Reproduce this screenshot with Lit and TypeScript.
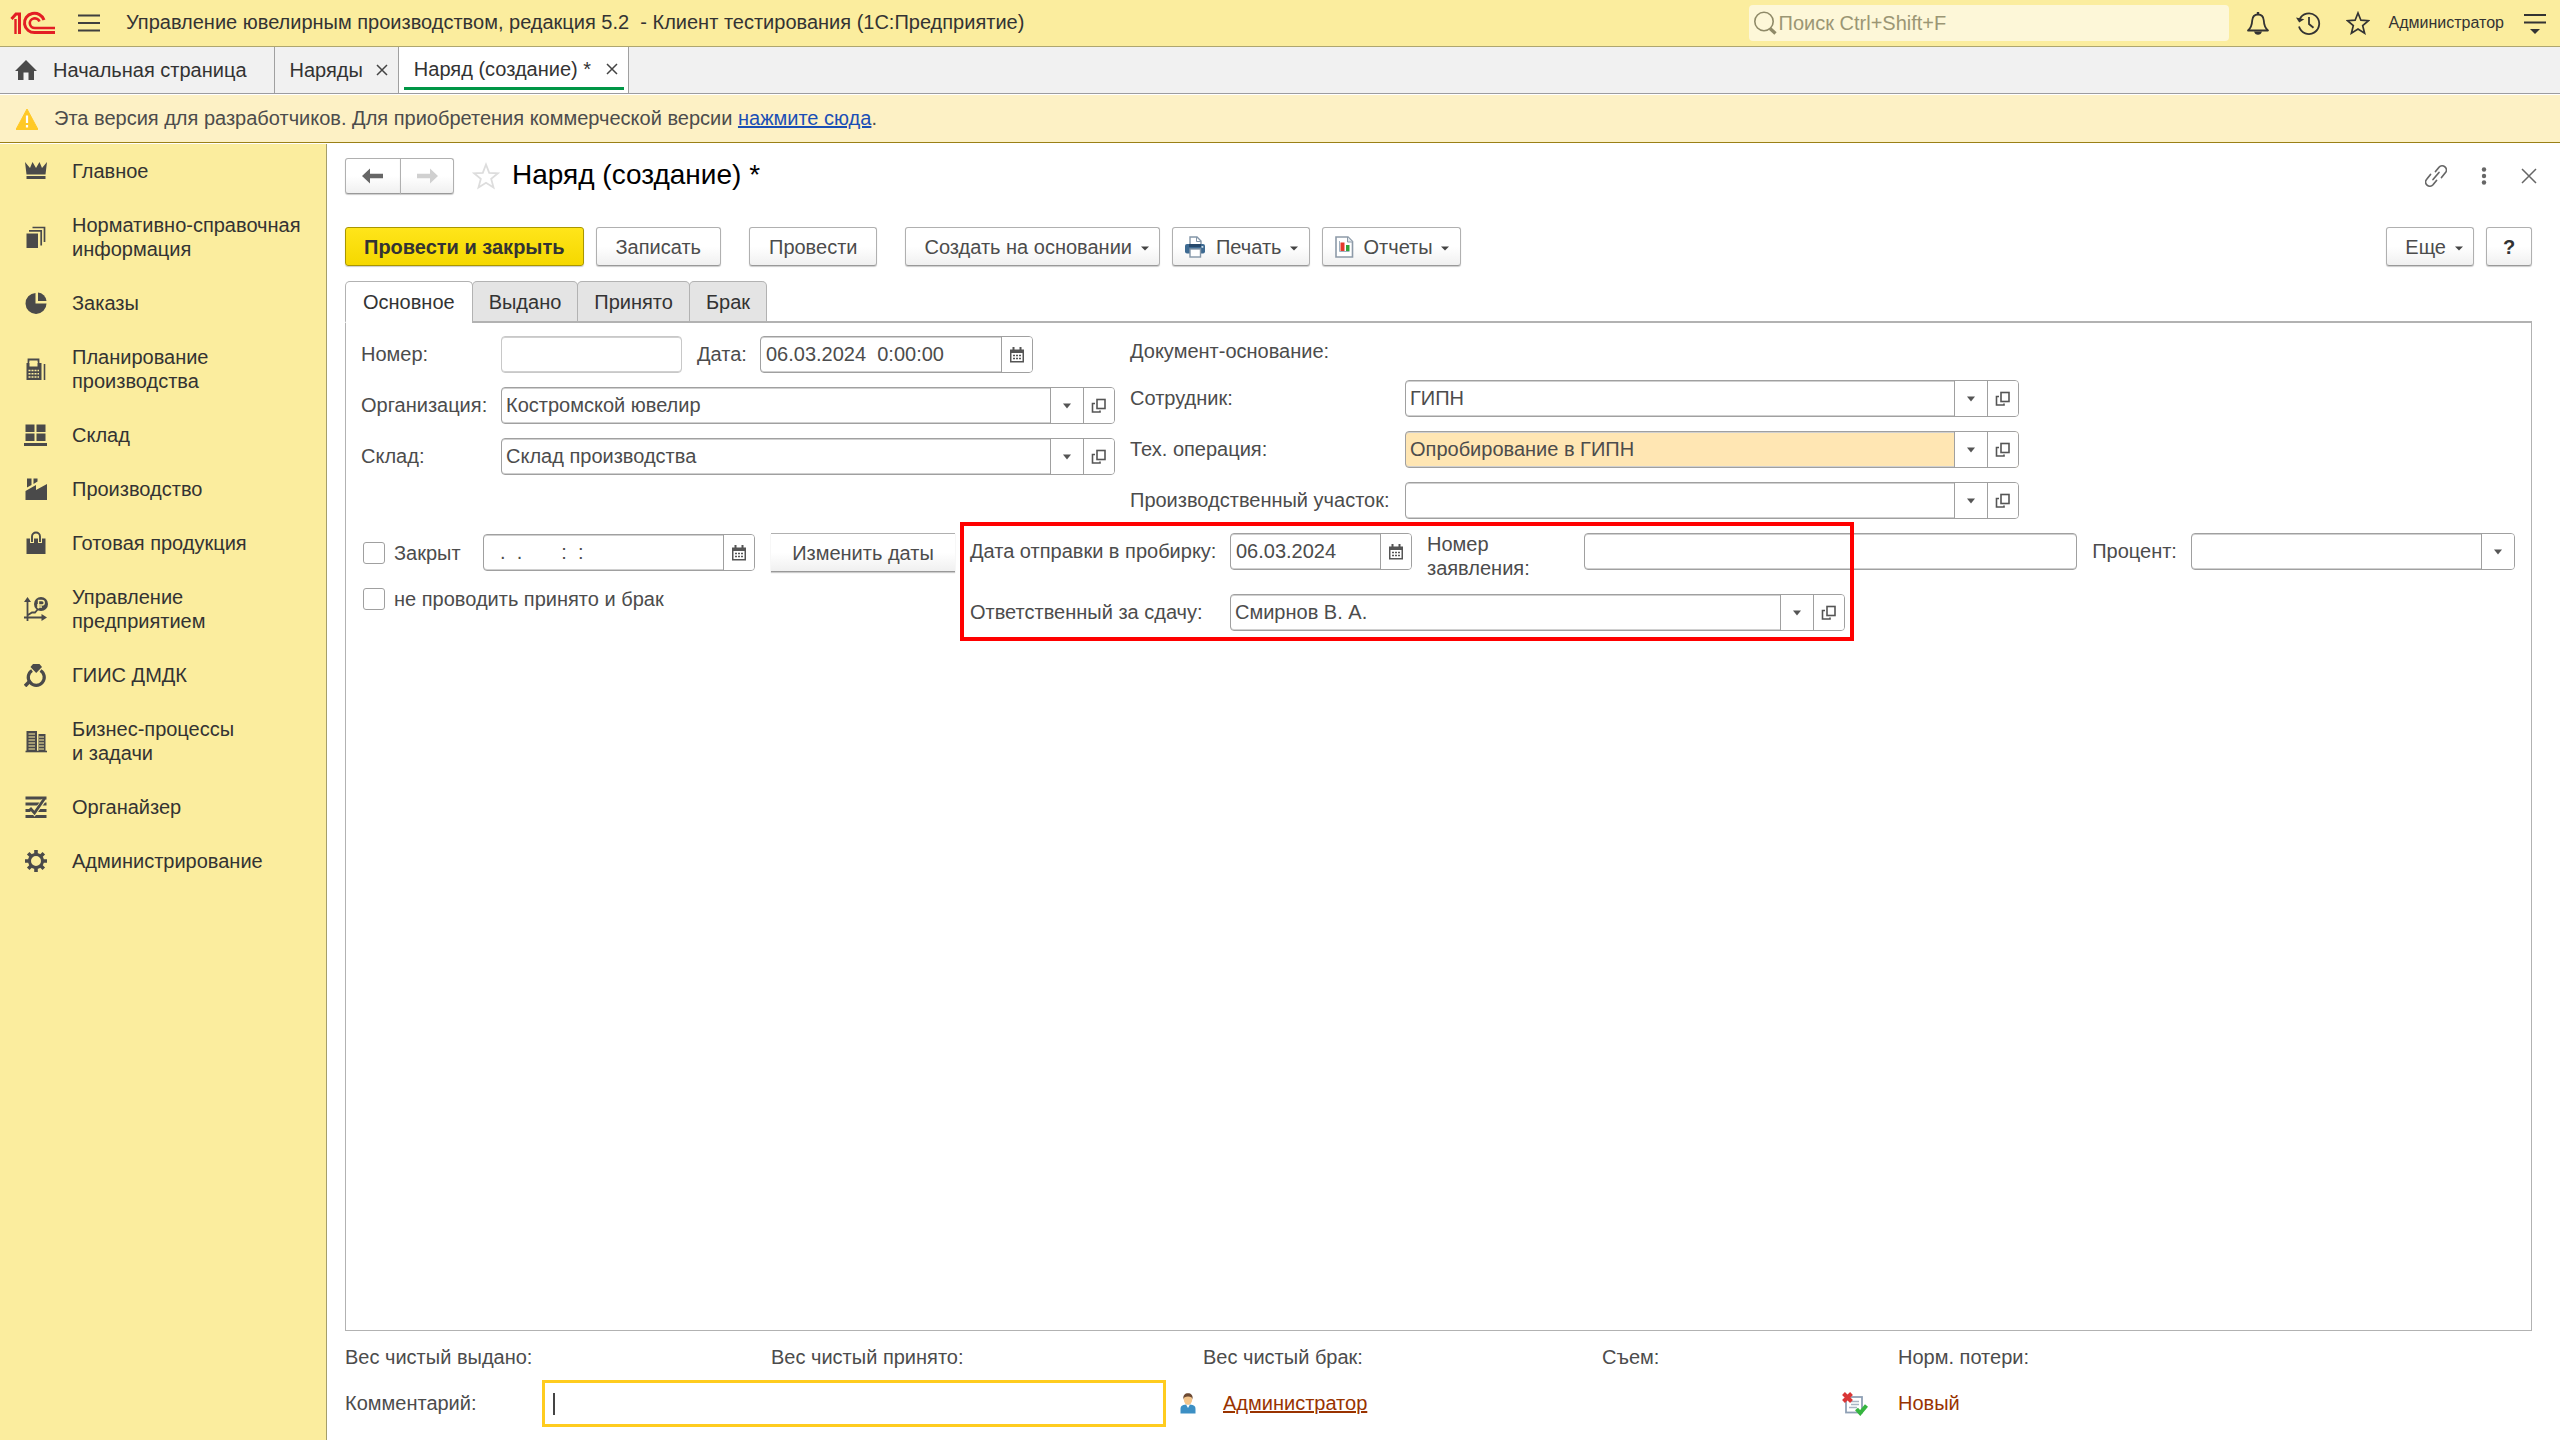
import { LitElement, html, svg, css, nothing, type TemplateResult } from "lit";
import { customElement, state } from "lit/decorators.js";

type Pic = TemplateResult;

const svgIcon = (w: number, h: number, body: unknown, vb = `0 0 ${w} ${h}`): Pic =>
  html`<svg class="ico" width=${w} height=${h} viewBox=${vb} aria-hidden="true">${body}</svg>`;

const logo = svgIcon(46, 24, svg`
  <g fill="none" stroke="#e31e24" stroke-width="3">
    <path d="M1.5 8 6 3h3.5v20"/>
    <path d="M5.5 8v15" stroke-width="2.4"/>
    <path d="M34 9A10 9.600 0 1 0 25 21.500H45"/>
    <path d="M29.500 10.500A5 4.800 0 1 0 25 17H45" stroke-width="2.600"/>
  </g>`);

const burger = svgIcon(22, 18, svg`<path d="M0 1.500H22M0 9H22M0 16.500H22" stroke="#3f3f3f" stroke-width="2"/>`);
const magnifier = svgIcon(24, 24, svg`<circle cx="11" cy="10.500" r="9.200" fill="none" stroke="#8f8a68" stroke-width="1.600"/><path d="M17 17.500 22.500 22.500" stroke="#8f8a68" stroke-width="3.400"/>`);
const bell = svgIcon(24, 24, svg`<path d="M2 19.500C5.500 16.500 6 14 6.200 9.500 6.500 5.500 8.500 3.500 12 3.500s5.500 2 5.800 6C18 14 18.500 16.500 22 19.500Z" fill="none" stroke="#333" stroke-width="1.800" stroke-linejoin="round"/><path d="M12 1v3" stroke="#333" stroke-width="2.400"/><path d="M8 20.500h8c-.5 2-2 3.300-4 3.300s-3.500-1.300-4-3.300Z" fill="#333"/>`);
const history = svgIcon(26, 24, svg`<path d="M4.500 8.500A10.300 10.300 0 1 1 4 15.500" fill="none" stroke="#333" stroke-width="1.800"/><path d="M1 6.500 4.200 11.500 9.300 8.200Z" fill="#333"/><path d="M14 6v7l4.500 3.800" fill="none" stroke="#333" stroke-width="1.800"/>`);
const starTop = svgIcon(24, 24, svg`<path d="M12 2 14.900 9.200 22.500 9.700 16.700 14.600 18.600 22.200 12 18 5.400 22.200 7.300 14.600 1.500 9.700 9.100 9.200Z" fill="none" stroke="#333" stroke-width="1.700"/>`);
const panelMenu = svgIcon(22, 22, svg`<path d="M0 3H22M0 10.500H22" stroke="#333" stroke-width="2"/><path d="M6 17h10l-5 5Z" fill="#333"/>`);
const home = svgIcon(22, 20, svg`<path d="M11 0 22 11H19V20H13.500V12.500H8.500V20H3V11H0Z" fill="#4a4a4a"/>`);
const cross = svgIcon(12, 12, svg`<path d="M1 1 11 11M11 1 1 11" stroke="#444" stroke-width="1.500"/>`);
const crossBig = svgIcon(16, 16, svg`<path d="M1 1 15 15M15 1 1 15" stroke="#666" stroke-width="1.500"/>`);
const warning = svgIcon(22, 22, svg`<path d="M11 1 22 21.500H0Z" fill="#ffc926" stroke="#ffc926" stroke-linejoin="round"/><path d="M11 7.500v7.500M11 17v2.500" stroke="#fff" stroke-width="2.200"/>`);
const arrowLeft = svgIcon(22, 16, svg`<path d="M0 8 8 0.500V5.800H21V10.200H8V15.500Z" fill="#666"/>`);
const arrowRight = svgIcon(22, 16, svg`<path d="M22 8 14 .5V5.800H1V10.200H14V15.500Z" fill="#d0d0d0"/>`);
const starBig = svgIcon(28, 28, svg`<path d="M14 2.500 17.200 10.800 26 11.300 19.200 16.900 21.500 25.500 14 20.700 6.500 25.500 8.800 16.900 2 11.300 10.800 10.800Z" fill="none" stroke="#ddd" stroke-width="1.800"/>`);
const link = svgIcon(22, 24, svg`<g fill="none" stroke="#666" stroke-width="1.700" stroke-linecap="round"><path d="M11.500 7.500 15 3.200a4.200 4.200 0 0 1 6.300 5.600L17.500 13.500"/><path d="M12.500 16.500 9 20.800a4.200 4.200 0 0 1-6.300-5.600L6.500 10.500"/><path d="M9 15.500 15 8.500"/></g>`, "1 0 22 24");
const dots = svgIcon(6, 18, svg`<circle cx="3" cy="2.500" r="2.200" fill="#666"/><circle cx="3" cy="9" r="2.200" fill="#666"/><circle cx="3" cy="15.500" r="2.200" fill="#666"/>`);
const caretDown = svgIcon(8, 8, svg`<path d="M0 3.500H8L4 7.500Z" fill="#444"/>`);
const caretField = svgIcon(8, 6, svg`<path d="M0 .5H8L4 5.500Z" fill="#555"/>`);
const openRef = svgIcon(16, 16, svg`<g fill="none" stroke="#555" stroke-width="1.600"><rect x="6" y="1.500" width="8" height="9"/><path d="M4 5.500H1.500V14H9V12.500"/></g>`);
const calendar = svgIcon(16, 16, svg`<path d="M1 2.500H15V15.500H1Z" fill="#555"/><path d="M2.500 6H13.500V14H2.500Z" fill="#fff"/><path d="M4.500 0V4M11.500 0V4" stroke="#555" stroke-width="2"/><path d="M4 8.500H12M4 11.500H12" stroke="#555" stroke-width="1.600" stroke-dasharray="2 1"/>`);
const printer = svgIcon(22, 22, svg`<path d="M6 9V1H13L17 5V9" fill="#fff" stroke="#8496a8" stroke-width="1.400"/><path d="M12.500 1V5.500H17" fill="none" stroke="#8496a8"/><rect x="1" y="8" width="20" height="9.500" rx="2" fill="#3d6a92"/><rect x="5" y="8" width="12" height="3" fill="#27496b"/><rect x="6" y="13" width="10.500" height="8" fill="#fff" stroke="#8496a8" stroke-width="1.400"/><rect x="17.500" y="10" width="1.800" height="1.800" fill="#cfe0ee"/>`);
const report = svgIcon(20, 22, svg`<path d="M2 1H14L18.500 5.500V21H2Z" fill="#fff" stroke="#8d9aa8" stroke-width="1.600"/><path d="M13.500 1V6H18.500" fill="#dfe5ea" stroke="#8d9aa8"/><path d="M5.500 5V15.500H15.500" fill="none" stroke="#9fb0bf"/><rect x="6.500" y="6.500" width="4" height="8.500" fill="#e5392c"/><rect x="12" y="9" width="3.500" height="6" fill="#30a33a"/>`);
const person = svgIcon(16, 21, svg`<path d="M0.500 20.500V16C.5 12.500 3 11.500 8 11.500s7.500 1 7.500 4.500v4.500Z" fill="#3c8fc4"/><path d="M6 11.500 8 15l2-3.500Z" fill="#fff"/><ellipse cx="8" cy="6.500" rx="4.200" ry="5.200" fill="#f3c58b"/><path d="M3.300 6.500C3 2 5 .3 8 .3s5 1.700 4.700 6.200C12 4.500 11 3.600 8 3.600S4 4.500 3.300 6.500Z" fill="#6d4a33"/>`);
const posting = svgIcon(26, 24, svg`<rect x="4" y="5" width="16" height="15.500" fill="#fff" stroke="#8fa0b5" stroke-width="1.800"/><path d="M9 9.500H17M9 12.500H17M7 15.500H15" stroke="#a9b5c4" stroke-width="1.400"/><path d="M1.500 1.500 9.500 9.500M9.500 1.500 1.500 9.500" stroke="#d93636" stroke-width="4"/><path d="M14.500 17 18.200 21 24.500 13.500" fill="none" stroke="#35b53f" stroke-width="4"/>`);

const D = "#4a4a4a";
const sections: { text: string; icon: unknown }[] = [
  { text: "Главное", icon: svg`<path d="M1 3 6 9 8.500 3 12 9 15.500 3 18 9 23 3 21.500 15.500H2.500Z" fill=${D}/><path d="M2.500 18.500H21.500" stroke=${D} stroke-width="3"/>` },
  { text: "Нормативно-справочная информация", icon: svg`<path d="M2.500 8.500H14V23H2.500Z" fill=${D}/><path d="M5 5.800H17.200V20.500M8.500 2.500H20.500V17" fill="none" stroke=${D} stroke-width="1.700"/>` },
  { text: "Заказы", icon: svg`<path d="M11.500 2V12.500H22.500A10.500 10.500 0 1 1 11.500 2Z" fill=${D}/><path d="M14 1.500A9.500 9.500 0 0 1 22.500 10H14Z" fill=${D}/>` },
  { text: "Планирование производства", icon: svg`<path d="M4.500 8V2.500H14.500V8" fill="none" stroke=${D} stroke-width="1.800"/><path d="M2.500 6H17.500V23H2.500Z" fill=${D}/><path d="M5.500 5H13.500V9.500H5.500Z" fill="#fbed9e"/><path d="M4.500 13.500H15M4.500 16.800H15M4.500 20H15" stroke="#fbed9e" stroke-width="1.600" stroke-dasharray="2 1"/><path d="M20.500 7V23" stroke=${D} stroke-width="1.600"/>` },
  { text: "Склад", icon: svg`<path d="M1.500 1.500H10.500V9H1.500ZM12.500 1.500H21.500V9H12.500ZM1.500 10.500H10.500V18H1.500ZM12.500 10.500H21.500V18H12.500ZM0 20H23V23H0Z" fill=${D}/>` },
  { text: "Производство", icon: svg`<path d="M3 1.500H7.500V8L3 10.500ZM9.500 1.500H13.500V4.500L9.500 7ZM1.500 14 12 8V13L23 7V23H1.500Z" fill=${D}/>` },
  { text: "Готовая продукция", icon: svg`<path d="M2.500 7.500H21.500V23H2.500Z" fill=${D}/><path d="M8 12V5.500a4 4 0 0 1 8 0V12" fill="none" stroke="#fbed9e" stroke-width="4"/><path d="M8 11V5.500a4 4 0 0 1 8 0V11" fill="none" stroke=${D} stroke-width="1.900"/>` },
  { text: "Управление предприятием", icon: svg`<path d="M3.500 24V4M0 20.500H20M4 18 8 15.500H11L14 12" fill="none" stroke=${D} stroke-width="1.800"/><path d="M3.500 0 7 5H0ZM23 20.500 17.500 24V17Z" fill=${D}/><circle cx="17" cy="7" r="7" fill=${D}/><path d="M14.500 11.500V3.500H18a2.200 2.200 0 0 1 0 4.500H13M13 10H18" fill="none" stroke="#fbed9e" stroke-width="1.400"/>` },
  { text: "ГИИС ДМДК", icon: svg`<path d="M8 7.500A8 8 0 1 0 16.500 7.500" fill="none" stroke=${D} stroke-width="3.200"/><path d="M6.500 17.500 1 23" stroke=${D} stroke-width="3.600"/><path d="M12.200 10 6.500 4 9 1H15.500L18 4Z" fill=${D}/>` },
  { text: "Бизнес-процессы и\u00a0задачи", icon: svg`<path d="M2.500 2H13V22.500H2.500ZM14.500 5H21.500V22.500H14.500Z" fill=${D}/><path d="M4.500 5H11M4.500 8H11M4.500 11H11M4.500 14H11M4.500 17H11M4.500 20H11M15 8H20M15 11H20M15 14H20M15 17H20M15 20H20" stroke="#fbed9e" stroke-width="1.200"/><path d="M1.500 22.500H23" stroke=${D} stroke-width="1.600"/>` },
  { text: "Органайзер", icon: svg`<path d="M1.500 3H22.500M1.500 9H22.500M1.500 15.500H22.500M1.500 21.500H22.500" stroke=${D} stroke-width="2.800"/><path d="M8 15 10.500 18 20 5" fill="none" stroke="#fbed9e" stroke-width="4.600"/><path d="M6 13 10.500 18 20.500 3.500" fill="none" stroke=${D} stroke-width="2.800"/>` },
  { text: "Администрирование", icon: svg`<circle cx="12" cy="12" r="6.500" fill="none" stroke=${D} stroke-width="3"/><path d="M12 1V5M12 19V23M1 12H5M19 12H23M4.200 4.200 7 7M17 17 19.800 19.800M19.800 4.200 17 7M7 17 4.200 19.800" stroke=${D} stroke-width="3.600"/>` },
];

const pages = ["Основное", "Выдано", "Принято", "Брак"];

@customElement("app-root")
export class AppRoot extends LitElement {
  @state() private page = 0;

  static styles = css`
    :host { display: flex; flex-direction: column; min-height: 100vh; background: #fff; color: #4c4c4c;
      font: 20px/24px "Liberation Sans", Arial, sans-serif; }
    * { box-sizing: border-box; }
    button, input, select { font: inherit; color: inherit; margin: 0; }
    button { cursor: pointer; }
    .ico { display: block; flex: none; }
    .plain { border: 0; background: none; padding: 0; display: flex; align-items: center; justify-content: center; }

    .top { display: flex; align-items: center; height: 47px; padding: 0 14px 0 10px; background: #fbed9e;
      border-bottom: 1px solid #aea66f; color: #333; }
    .top .burger { margin: 0 26px 0 22px; }
    .top h1 { font: inherit; margin: 0; padding-bottom: 2px; white-space: pre; flex: 1; }
    .search { display: flex; align-items: center; gap: 6px; width: 480px; height: 36px; padding-left: 4px; margin-right: 17px;
      border-radius: 4px; background: #fdf7d8; }
    .search input { flex: 1; min-width: 0; border: 0; background: none; padding: 0; outline: 0; margin-left: -4px; }
    .search input::placeholder { color: #9b9674; opacity: 1; }
    .top .icons { display: flex; gap: 25px; margin-right: 19px; }
    .user { font-size: 16px; margin-right: 20px; }

    .tabs { display: flex; height: 47px; background: #f1f1f1; border-bottom: 1px solid #9c9ca0; color: #333; }
    .tab { display: flex; align-items: center; border-right: 1px solid #a0a0a0; }
    .tab .label { color: inherit; font: inherit; }
    .tab.home { padding: 0 27px 0 15px; }
    .tab.home .label { gap: 16px; }
    .tab.doc { padding: 0 10px 0 15px; gap: 13px; }
    .tab.on { background: #fff; }
    .tab.on .inner { display: flex; align-items: center; gap: 15px; height: 43px; align-self: flex-start;
      margin: 0 4px 0 5px; padding: 0 6px 0 10px; border-bottom: 3px solid #009646; border-top: 3px solid #fff; }

    .notice { display: flex; align-items: center; gap: 16px; height: 48px; margin-top: 1px; padding: 0 16px;
      background: #fdf1c5; border-bottom: 1px solid #9a8016; }
    .notice p { margin: 0; padding-bottom: 2px; }
    .notice a { color: #1a4fb5; }

    .body { display: flex; flex: 1; margin-top: 1px; }
    .side { width: 327px; flex: none; background: #fbed9e; border-right: 1px solid #a59e6a; }
    .side ul { list-style: none; margin: 0; padding: 0; }
    .side a { display: flex; align-items: center; gap: 24px; padding: 15px 16px 15px 24px; color: #333; text-decoration: none; }
    .side span { max-width: 232px; }
    .side .narrow { max-width: 190px; }

    main { flex: 1; min-width: 0; display: flex; flex-direction: column; padding: 14px 28px 13px 18px; }
    .head { display: flex; align-items: center; height: 36px; }
    .btn { display: flex; align-items: center; justify-content: center; border: 1px solid #b0b0b0; border-bottom-color: #999; border-radius: 3px;
      background: linear-gradient(#fff 50%, #f0f0f0); box-shadow: 0 1px 1px #ccc; height: 39px; padding: 0 19px; white-space: nowrap; }
    .nav { display: flex; margin-right: 18px; }
    .nav .btn { height: 36px; padding: 0; width: 56px; border-radius: 3px 0 0 3px; }
    .nav .btn + .btn { width: 54px; margin-left: -1px; border-radius: 0 3px 3px 0; }
    .head h2 { font-size: 28px; font-weight: 400; line-height: 32px; color: #000; margin: 0; padding: 0 0 2px 12px; flex: 1; }
    .tools { display: flex; align-items: center; gap: 34px; margin-right: -5px; }
    .commands { display: flex; margin-top: 33px; }
    .commands .btn { margin-right: 12px; }
    .commands .apart { margin-right: 28px; }
    .commands .menu { gap: 9px; padding: 0 10px 0 18px; }
    .commands .pic { padding: 0 11px; gap: 10px; }
    .commands .pic .ico:last-child { margin-left: -2px; }
    .commands .push { margin-left: auto; }
    .commands .help { margin: 0; width: 46px; padding: 0; font-weight: 700; color: #333; }
    .btn.main { background: linear-gradient(#ffe51a, #f5d800); border-color: #a99600; padding: 0 18px; font-weight: 700; color: #333; }

    .pages { display: flex; margin-top: 15px; height: 42px; }
    .page { border: 1px solid #b2b2b2; border-bottom: 2px solid #b2b2b2; background: #e4e4e4; padding: 0 16px; margin-right: -1px; border-radius: 5px 5px 0 0; color: #333; }
    .page.on { background: #fff; border-bottom-color: #fff; padding: 0 17px; }
    .pages .rest { flex: 1; border-bottom: 2px solid #b2b2b2; }
    .panel { flex: 1; border: 1px solid #b2b2b2; border-top: 0; padding: 13px 16px 13px 15px; }

    .upper { display: flex; gap: 15px; height: 184px; }
    .grid { display: grid; grid-template-columns: 140px 614px; grid-auto-rows: 37px; row-gap: 14px; align-content: start; align-items: center; }
    .grid.right { grid-template-columns: 275px 614px; grid-template-rows: 30px; }
    .grid label, .line label { padding-bottom: 2px; }
    .number { display: flex; align-items: center; }
    .number label { width: 78px; padding-left: 15px; }
    .number > .field { width: 181px; }
    .number > .date { width: 273px; }

    .field { display: flex; height: 37px; border: 1px solid #a0a0a0; border-radius: 4px; min-width: 0;
      box-shadow: inset 0 1px #d0d0d0, inset 0 -1px #d0d0d0; background: #fff; overflow: hidden; }
    .field.off { border-color: #c8c8c8; }
    .field input { flex: 1; min-width: 0; width: 100%; border: 0; padding: 0 5px 2px; background: none; outline: 0; }
    .pick { display: grid; flex: 1; min-width: 0; grid-template-columns: 1fr 33px; align-items: stretch; }
    .pick select { grid-area: 1 / 1 / 2 / 3; appearance: none; border: 0; background: none; padding: 0 36px 2px 4px; outline: 0; min-width: 0; }
    .pick span { grid-area: 1 / 2; border-left: 1px solid #a0a0a0; pointer-events: none; display: flex; align-items: center; justify-content: center; background: #fff; }
    .field.mark { background: #ffe6b3; }
    .field button { width: 31px; border-left: 1px solid #a0a0a0; background: #fff; flex: none; }

    .lower { display: flex; align-items: flex-start; gap: 15px; padding-top: 13px; }
    .closing { width: 594px; display: grid; grid-template-columns: 122px 272px 1fr; grid-template-rows: 39px 29px; row-gap: 12px; align-items: center; }
    .check { display: flex; align-items: center; gap: 9px; white-space: nowrap; padding-left: 2px; }
    .check input { appearance: none; width: 22px; height: 22px; border: 1px solid #a0a0a0; border-radius: 3px; background: #fff; flex: none; }
    .closing .wide { grid-column: 1 / 4; }
    .closing .btn { margin-left: 16px; border-width: 1px 0; border-radius: 0; padding: 0; }
    .assay { position: relative; flex: 1; min-width: 0; display: flex; flex-direction: column; gap: 24px; }
    .line { display: flex; align-items: center; height: 37px; }
    .line .first { width: 260px; flex: none; }
    .line .day { width: 182px; flex: none; }
    .line .second { width: 172px; padding: 8px 40px 0 15px; flex: none; }
    .line .app { flex: 493 1 0; }
    .line .third { padding: 0 13px 2px 15px; width: 114px; flex: none; }
    .line .pct { flex: 323 1 0; }
    .line .wide { width: 615px; }
    .frame { position: absolute; left: -10px; top: -11px; width: 894px; height: 119px; border: 4px solid #f00; pointer-events: none; }

    .totals { display: grid; grid-template-columns: 426px 432px 399px 296px 1fr; margin-top: 14px; }
    .foot { display: grid; grid-template-columns: 197px 624px 57px 619px 56px 1fr; align-items: center; margin-top: 11px; }
    .comment { display: flex; align-items: center; height: 47px; border: 3px solid #ffcc1f; padding: 0 8px; background: #fff; }
    .comment i { width: 2px; height: 22px; background: #444; }
    .comment input { flex: 1; min-width: 0; border: 0; outline: 0; background: none; padding: 0; caret-color: transparent; }
    .foot .person { padding-left: 14px; }
    .foot label, .foot a, .foot output { padding-bottom: 2px; }
    .foot a, .foot output { color: #993300; }
  `;

  private combo(id: string, value: string, cls = "", open = true) {
    return html`<div class="field ${cls}">
      <div class="pick">
        <select id=${id}><option>${value}</option></select>
        <span>${caretField}</span>
      </div>
      ${open ? html`<button class="plain" aria-label="Открыть">${openRef}</button>` : nothing}
    </div>`;
  }

  private date(id: string, value: string, cls = "") {
    return html`<div class="field ${cls}">
      <input id=${id} .value=${value}>
      <button class="plain" aria-label="Выбрать дату">${calendar}</button>
    </div>`;
  }

  private renderTop() {
    return html`<header class="top">
        ${logo}
        <button class="plain burger" aria-label="Меню">${burger}</button>
        <h1>Управление ювелирным производством, редакция 5.2  - Клиент тестирования (1С:Предприятие)</h1>
        <label class="search">${magnifier}<input type="search" placeholder="Поиск Ctrl+Shift+F" aria-label="Поиск"></label>
        <div class="icons">
          <button class="plain" aria-label="Уведомления">${bell}</button>
          <button class="plain" aria-label="История">${history}</button>
          <button class="plain" aria-label="Избранное">${starTop}</button>
        </div>
        <span class="user">Администратор</span>
        <button class="plain" aria-label="Настройки">${panelMenu}</button>
      </header>
      <nav class="tabs">
        <div class="tab home"><button class="plain label">${home}Начальная страница</button></div>
        <div class="tab doc"><button class="plain label">Наряды</button><button class="plain" aria-label="Закрыть">${cross}</button></div>
        <div class="tab on"><div class="inner"><button class="plain label">Наряд (создание) *</button><button class="plain" aria-label="Закрыть">${cross}</button></div></div>
      </nav>
      <div class="notice">${warning}<p>Эта версия для разработчиков. Для приобретения коммерческой версии <a href="#buy">нажмите сюда</a>.</p></div>`;
  }

  private renderForm() {
    return html`<div class="upper">
        <div class="grid">
          <label for="num">Номер:</label>
          <div class="number">
            <div class="field off"><input id="num"></div>
            <label for="date">Дата:</label>
            ${this.date("date", "06.03.2024  0:00:00", "date")}
          </div>
          <label for="org">Организация:</label>${this.combo("org", "Костромской ювелир")}
          <label for="store">Склад:</label>${this.combo("store", "Склад производства")}
        </div>
        <div class="grid right">
          <span>Документ-основание:</span><span></span>
          <label for="emp">Сотрудник:</label>${this.combo("emp", "ГИПН")}
          <label for="op">Тех. операция:</label>${this.combo("op", "Опробирование в ГИПН", "mark")}
          <label for="area">Производственный участок:</label>${this.combo("area", "")}
        </div>
      </div>
      <div class="lower">
        <div class="closing">
          <label class="check"><input type="checkbox">Закрыт</label>
          ${this.date("closed", "  .  .       :  :")}
          <button class="btn">Изменить даты</button>
          <label class="check wide"><input type="checkbox">не проводить принято и брак</label>
        </div>
        <div class="assay">
          <div class="line">
            <label class="first" for="sent">Дата отправки в пробирку:</label>
            ${this.date("sent", "06.03.2024", "day")}
            <label class="second" for="app">Номер заявления:</label>
            <div class="field app"><input id="app"></div>
            <label class="third" for="pct">Процент:</label>
            ${this.combo("pct", "", "pct", false)}
          </div>
          <div class="line">
            <label class="first" for="resp">Ответственный за сдачу:</label>
            ${this.combo("resp", "Смирнов В. А.", "wide")}
          </div>
          <div class="frame"></div>
        </div>
      </div>`;
  }

  render() {
    return html`${this.renderTop()}
      <div class="body">
        <nav class="side"><ul>
          ${sections.map((s, i) => html`<li><a href="#s${i}">${svgIcon(24, 24, s.icon)}<span class=${i === 1 ? "" : "narrow"}>${s.text}</span></a></li>`)}
        </ul></nav>
        <main>
          <div class="head">
            <div class="nav">
              <button class="btn" aria-label="Назад">${arrowLeft}</button>
              <button class="btn" aria-label="Вперед">${arrowRight}</button>
            </div>
            <button class="plain" aria-label="В избранное">${starBig}</button>
            <h2>Наряд (создание) *</h2>
            <div class="tools">
              <button class="plain" aria-label="Ссылка">${link}</button>
              <button class="plain" aria-label="Еще">${dots}</button>
              <button class="plain" aria-label="Закрыть">${crossBig}</button>
            </div>
          </div>
          <div class="commands">
            <button class="btn main">Провести и закрыть</button>
            <button class="btn apart">Записать</button>
            <button class="btn apart">Провести</button>
            <button class="btn menu">Создать на основании${caretDown}</button>
            <button class="btn pic">${printer}Печать${caretDown}</button>
            <button class="btn pic">${report}Отчеты${caretDown}</button>
            <button class="btn menu push">Еще${caretDown}</button>
            <button class="btn help">?</button>
          </div>
          <div class="pages">
            ${pages.map((p, i) => html`<button class="page ${i === this.page ? "on" : ""}" @click=${() => (this.page = i)}>${p}</button>`)}
            <div class="rest"></div>
          </div>
          <section class="panel">${this.renderForm()}</section>
          <div class="totals">
            <span>Вес чистый выдано:</span><span>Вес чистый принято:</span><span>Вес чистый брак:</span><span>Съем:</span><span>Норм. потери:</span>
          </div>
          <div class="foot">
            <label for="comment">Комментарий:</label>
            <div class="comment"><i></i><input id="comment"></div>
            <span class="person">${person}</span>
            <a href="#admin">Администратор</a>
            ${posting}
            <output>Новый</output>
          </div>
        </main>
      </div>`;
  }
}
